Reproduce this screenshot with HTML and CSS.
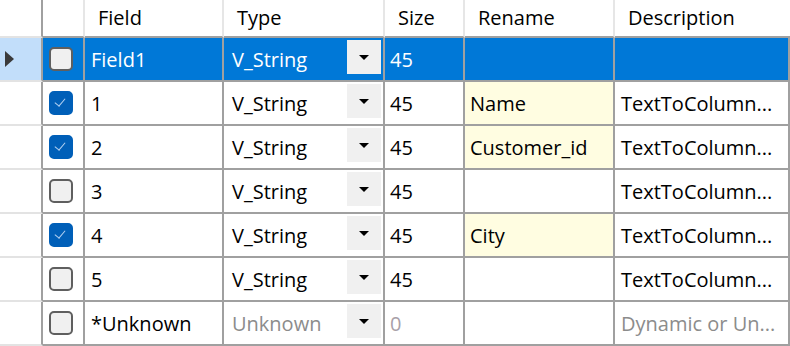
FILE: index.html
```html
<!DOCTYPE html>
<html lang="en">

<head>
    <meta charset="UTF-8">
    <title>Field Grid</title>
    <link rel="stylesheet" href="styles.css">
</head>

<body>

    <div class="grid">
        <div class="row head">
            <div class="cell c-rh"></div>
            <div class="cell c-cb"></div>
            <div class="cell c-field">Field</div>
            <div class="cell c-type">Type</div>
            <div class="cell c-size">Size</div>
            <div class="cell c-rename">Rename</div>
            <div class="cell c-desc">Description</div>
        </div>

        <div class="row selected">
            <div class="cell c-rh"><span class="pointer"></span></div>
            <div class="cell c-cb"><span class="check"></span></div>
            <div class="cell c-field">Field1</div>
            <div class="cell c-type">V_String<span class="drop"></span></div>
            <div class="cell c-size">45</div>
            <div class="cell c-rename"></div>
            <div class="cell c-desc"></div>
        </div>

        <div class="row">
            <div class="cell c-rh"></div>
            <div class="cell c-cb"><span class="check on"></span></div>
            <div class="cell c-field">1</div>
            <div class="cell c-type">V_String<span class="drop"></span></div>
            <div class="cell c-size">45</div>
            <div class="cell c-rename filled">Name</div>
            <div class="cell c-desc">TextToColumn...</div>
        </div>

        <div class="row">
            <div class="cell c-rh"></div>
            <div class="cell c-cb"><span class="check on"></span></div>
            <div class="cell c-field">2</div>
            <div class="cell c-type">V_String<span class="drop"></span></div>
            <div class="cell c-size">45</div>
            <div class="cell c-rename filled">Customer_id</div>
            <div class="cell c-desc">TextToColumn...</div>
        </div>

        <div class="row">
            <div class="cell c-rh"></div>
            <div class="cell c-cb"><span class="check"></span></div>
            <div class="cell c-field">3</div>
            <div class="cell c-type">V_String<span class="drop"></span></div>
            <div class="cell c-size">45</div>
            <div class="cell c-rename"></div>
            <div class="cell c-desc">TextToColumn...</div>
        </div>

        <div class="row">
            <div class="cell c-rh"></div>
            <div class="cell c-cb"><span class="check on"></span></div>
            <div class="cell c-field">4</div>
            <div class="cell c-type">V_String<span class="drop"></span></div>
            <div class="cell c-size">45</div>
            <div class="cell c-rename filled">City</div>
            <div class="cell c-desc">TextToColumn...</div>
        </div>

        <div class="row">
            <div class="cell c-rh"></div>
            <div class="cell c-cb"><span class="check"></span></div>
            <div class="cell c-field">5</div>
            <div class="cell c-type">V_String<span class="drop"></span></div>
            <div class="cell c-size">45</div>
            <div class="cell c-rename"></div>
            <div class="cell c-desc">TextToColumn...</div>
        </div>

        <div class="row">
            <div class="cell c-rh"></div>
            <div class="cell c-cb"><span class="check"></span></div>
            <div class="cell c-field">*Unknown</div>
            <div class="cell c-type muted">Unknown<span class="drop"></span></div>
            <div class="cell c-size faint">0</div>
            <div class="cell c-rename"></div>
            <div class="cell c-desc muted">Dynamic or Un...</div>
        </div>
    </div>

</body>

</html>
```

FILE: styles.css
```css
body {
    margin: 0;
    font-family: 'Segoe UI', 'Open Sans', sans-serif;
    font-size: 20px;
    color: #000;
    background-color: #fff;
}

.grid {
    width: 790px;
}

.row {
    display: flex;
    height: 44px;
}

.cell {
    box-sizing: border-box;
    display: flex;
    align-items: center;
    padding-left: 6px;
    border-right: 2px solid #a0a0a0;
    border-bottom: 2px solid #a0a0a0;
    white-space: nowrap;
    overflow: hidden;
}

.c-rh {
    width: 43px;
    padding-left: 5px;
    border-bottom-color: #e3e3e3;
}

.c-cb {
    width: 42px;
    padding-left: 6px;
}

.c-field {
    width: 139px;
}

.c-type {
    width: 161px;
    padding-left: 8px;
}

.c-size {
    width: 80px;
    padding-left: 5px;
}

.c-rename {
    width: 150px;
    padding-left: 5px;
}

.c-desc {
    width: 175px;
}

/* header */
.row.head {
    height: 38px;
}

.head .cell {
    padding-left: 13px;
    padding-bottom: 2px;
    border-right: 2px solid #e6e6e6;
}

.head .c-rh {
    border-right-color: #a0a0a0;
}

.head .c-desc {
    border-right: none;
}

/* selected row */
.selected .cell {
    background-color: #0078d7;
    color: #fff;
}

.selected .c-rh {
    background-color: #c2defa;
}

.pointer {
    width: 0;
    height: 0;
    border-left: 9px solid #3a3a3a;
    border-top: 8px solid transparent;
    border-bottom: 8px solid transparent;
}

/* checkbox */
.check {
    box-sizing: border-box;
    width: 24px;
    height: 24px;
    border: 2px solid #5f5f5f;
    border-radius: 5px;
    background-color: #f0f0f0;
    position: relative;
}

.check.on {
    border-color: #005fb8;
    background-color: #005fb8;
}

.check.on::after {
    content: "";
    position: absolute;
    left: 6px;
    top: 3px;
    width: 5px;
    height: 9px;
    border-right: 1.5px solid #b5d2f2;
    border-bottom: 1.5px solid #b5d2f2;
    transform: rotate(40deg);
}

/* type dropdown */
.drop {
    margin-left: auto;
    margin-right: 2px;
    align-self: flex-start;
    margin-top: 2px;
    width: 34px;
    height: 34px;
    background-color: #f0f0f0;
    display: flex;
    align-items: center;
    justify-content: center;
}

.drop::after {
    content: "";
    width: 0;
    height: 0;
    border-top: 5px solid #000;
    border-left: 5px solid transparent;
    border-right: 5px solid transparent;
}

.filled {
    background-color: #fffde1;
}

.muted {
    color: #8c8c8c;
}

.faint {
    color: #a8a0a8;
}
```
